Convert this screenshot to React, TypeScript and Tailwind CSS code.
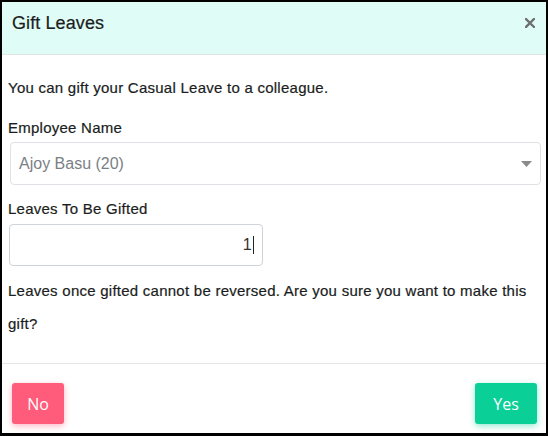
import { useState } from 'react';

export default function App() {
  const [employee] = useState('Ajoy Basu (20)');
  const [leaves] = useState('1');

  return (
    <div
      className="w-[548px] h-[436px] flex flex-col bg-white border-2 border-b-[3px] border-black text-[#1a1d21]"
      style={{ fontFamily: '"Liberation Sans", Arial, sans-serif' }}
    >
      {/* Header */}
      <div className="h-[53px] shrink-0 flex items-start justify-between bg-[#e0fcf6] border-b border-[#dfe6e5] pl-[10px] pr-[11px] pt-[11px]">
        <h2 className="text-[18px] leading-[20px] tracking-[0.1px] text-[#1a1d21] [-webkit-text-stroke:0.2px_#1a1d21]">Gift Leaves</h2>
        <button className="mt-[5px] text-[#6f6f6f]" aria-label="Close">
          <svg width="10" height="10" viewBox="0 0 10 10">
            <path d="M1 1 L9 9 M9 1 L1 9" stroke="currentColor" strokeWidth="2.4" strokeLinecap="square" />
          </svg>
        </button>
      </div>

      {/* Body */}
      <div className="flex-1 pl-[6px] pr-[5px] pt-[23px] text-[15px] leading-[20px] tracking-[0.25px]">
        <p className="[-webkit-text-stroke:0.2px_#1a1d21]">You can gift your Casual Leave to a colleague.</p>

        <label className="block mt-[20px] [-webkit-text-stroke:0.2px_#1a1d21]">Employee Name</label>
        <div className="mt-[4px] ml-[2px] h-[43px] flex items-center justify-between border border-[#dee2e6] rounded-[4px] pl-[8px] pr-[8px] tracking-normal">
          <span className="text-[16px] text-[#7a7f85]">{employee}</span>
          <svg width="11" height="6" viewBox="0 0 11 6">
            <path d="M0 0 H11 L5.5 6 Z" fill="#8a8a8a" />
          </svg>
        </div>

        <label className="block mt-[14px] [-webkit-text-stroke:0.2px_#1a1d21]">Leaves To Be Gifted</label>
        <div className="mt-[5px] ml-[1px] w-[254px] h-[42px] flex items-center justify-end border border-[#ced4da] rounded-[4px] pr-[8px]">
          <span className="text-[16px] text-[#333]">{leaves}</span>
          <span className="w-[1px] h-[18px] bg-[#222] ml-[1px]" />
        </div>

        <p className="mt-[8px] leading-[33px] [-webkit-text-stroke:0.2px_#1a1d21]">
          Leaves once gifted cannot be reversed. Are you sure you want to make this gift?
        </p>
      </div>

      {/* Footer */}
      <div
        className="shrink-0 flex items-center justify-between border-t border-[#e3e7e8] pl-[10px] pr-[9px] pt-[19px] pb-[9px]"
        style={{ fontFamily: '"Open Sans", "Noto Sans", sans-serif' }}
      >
        <button className="w-[52px] h-[41px] rounded-[3px] bg-[#ff5b7b] text-white text-[16px] font-medium shadow-[0_2px_6px_0_rgba(255,91,123,0.45)]">
          No
        </button>
        <button className="w-[62px] h-[41px] rounded-[3px] bg-[#0acf97] text-white text-[16px] font-medium shadow-[0_2px_6px_0_rgba(10,207,151,0.45)]">
          Yes
        </button>
      </div>
    </div>
  );
}
